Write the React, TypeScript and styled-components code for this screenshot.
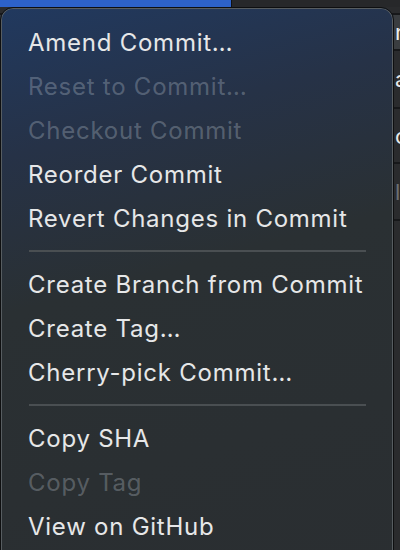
import React from "react";
import styled, { createGlobalStyle } from "styled-components";

const Global = createGlobalStyle`
  html, body { margin: 0; padding: 0; background: #252628; }
  body { font-family: Inter, "Noto Sans", sans-serif; -webkit-font-smoothing: antialiased; }
`;

const Page = styled.div`
  position: relative;
  width: 400px;
  height: 550px;
  overflow: hidden;
  background: #2a2b2d;
`;

const Backdrop = styled.div`
  display: flex;
  flex-direction: column;
  height: 100%;
`;

const TopStrip = styled.div`
  display: flex;
  height: 7px;
  flex: none;
`;

const Selection = styled.div`
  width: 231px;
  background: #2d62c9;
  border-right: 1px solid #111214;
`;

const StripRest = styled.div`
  flex: 1;
  background: #27282a;
`;

const ListRow = styled.div<{ $h: number; $active?: boolean }>`
  display: grid;
  grid-template-columns: 393px 1fr;
  align-items: center;
  height: ${(p) => p.$h}px;
  flex: none;
  background: ${(p) => (p.$active ? "#3a3d40" : "#2a2b2d")};
  border-bottom: 2px solid #17181a;
  color: ${(p) => (p.$active ? "#f0f0f0" : "#e8e8e8")};
  font-size: 22px;
  overflow: hidden;
  white-space: nowrap;
`;

const RowText = styled.span<{ $faint?: boolean }>`
  grid-column: 2;
  padding-left: 2px;
  color: ${(p) => (p.$faint ? "#6d7074" : "inherit")};
`;

const Filler = styled.div`
  flex: 1;
  background: #2a2b2d;
`;

const Menu = styled.div`
  position: absolute;
  left: 0;
  top: 7px;
  width: 394px;
  height: 580px;
  box-sizing: border-box;
  padding: 12px 0;
  border-radius: 13px;
  border: 1px solid #0e0f10;
  box-shadow: inset 0 0 0 1px #575d61;
  background:
    linear-gradient(165deg, #21395f 0%, #263247 22%, #2a3033 45%, #2a2e31 100%);
  display: flex;
  flex-direction: column;
`;

const Item = styled.div<{ $disabled?: boolean }>`
  height: 44px;
  display: flex;
  align-items: center;
  padding-left: 27px;
  font-size: 24px;
  letter-spacing: 0.75px;
  color: ${(p) => (p.$disabled ? "rgba(200, 210, 220, 0.3)" : "#e6e7e8")};
  white-space: nowrap;
`;

const Separator = styled.div`
  height: 22px;
  display: flex;
  align-items: center;
  padding: 0 27px 0 28px;
  &::after {
    content: "";
    flex: 1;
    height: 2px;
    background: #4a4f52;
  }
`;

type Entry = { label: string; disabled?: boolean } | "sep";

const entries: Entry[] = [
  { label: "Amend Commit…" },
  { label: "Reset to Commit…", disabled: true },
  { label: "Checkout Commit", disabled: true },
  { label: "Reorder Commit" },
  { label: "Revert Changes in Commit" },
  "sep",
  { label: "Create Branch from Commit" },
  { label: "Create Tag…" },
  { label: "Cherry-pick Commit…" },
  "sep",
  { label: "Copy SHA" },
  { label: "Copy Tag", disabled: true },
  { label: "View on GitHub" },
];

export default function App() {
  return (
    <>
      <Global />
      <Page>
        <Backdrop>
          <TopStrip>
            <Selection />
            <StripRest />
          </TopStrip>
          <ListRow $h={6} />
          <ListRow $h={34} $active>
            <RowText>n</RowText>
          </ListRow>
          <ListRow $h={56}>
            <RowText>a</RowText>
          </ListRow>
          <ListRow $h={53}>
            <RowText>c</RowText>
          </ListRow>
          <ListRow $h={55}>
            <RowText $faint>l</RowText>
          </ListRow>
          <Filler />
        </Backdrop>
        <Menu>
          {entries.map((e, i) =>
            e === "sep" ? (
              <Separator key={i} />
            ) : (
              <Item key={i} $disabled={e.disabled}>
                {e.label}
              </Item>
            )
          )}
        </Menu>
      </Page>
    </>
  );
}
